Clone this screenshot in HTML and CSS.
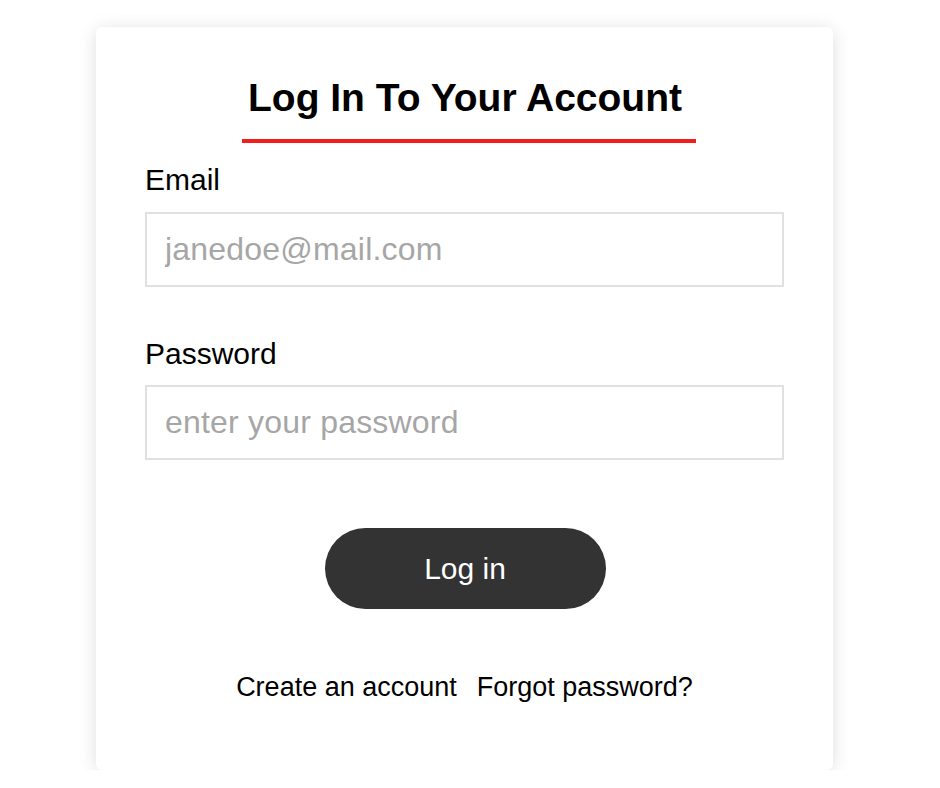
FILE: index.html
```html
<!DOCTYPE html>
<html lang="en">
<head>
<meta charset="utf-8">
<title>Log In</title>
<link rel="stylesheet" href="styles.css">
</head>
<body>
<div class="card">
  <div class="title-wrap"><h1 class="title">Log In To Your Account</h1></div>
  <form class="form">
    <label class="label" for="email">Email</label>
    <input class="field" id="email" type="text" placeholder="janedoe@mail.com">
    <label class="label label-second" for="password">Password</label>
    <input class="field" id="password" type="password" placeholder="enter your password">
    <div class="actions"><button type="button" class="btn">Log in</button></div>
  </form>
  <div class="links">
    <a class="link" href="#">Create an account</a>
    <a class="link" href="#">Forgot password?</a>
  </div>
</div>
</body>
</html>
```
FILE: styles.css
```css
* { box-sizing: border-box; }
html, body { margin: 0; padding: 0; background: #ffffff; }
body { font-family: "Liberation Sans", Arial, sans-serif; color: #000; }

.card {
  margin: 27px 0 0 96px;
  width: 737px;
  height: 743px;
  background: #fff;
  border-radius: 6px;
  box-shadow: 0 2px 18px rgba(0, 0, 0, 0.13);
  padding: 49px 49px 0;
}

.title-wrap { text-align: center; }
.title {
  display: inline-block;
  margin: 0 0 0 9px;
  font-size: 39px;
  line-height: 44px;
  font-weight: 700;
  padding: 0 14px 19px 6px;
  border-bottom: 4px solid #f21d1d;
}

.form { display: flex; flex-direction: column; }
.label {
  margin-top: 20px;
  font-size: 30px;
  line-height: 34px;
  color: #000;
}
.label-second { margin-top: 50px; }

.field {
  margin-top: 15px;
  width: 100%;
  height: 75px;
  border: 2px solid #e1e1e1;
  padding: 0 18px;
  font-family: "Liberation Sans", Arial, sans-serif;
  font-size: 32px;
  letter-spacing: 0.2px;
  color: #333;
  outline: none;
  background: #fff;
}
.label-second + .field { margin-top: 14px; }
.field::placeholder { color: #a6a6a6; }

.actions { display: flex; justify-content: center; margin-top: 68px; }
.btn {
  width: 281px;
  height: 81px;
  border: none;
  border-radius: 41px;
  background: #333333;
  color: #fff;
  font-family: "Liberation Sans", Arial, sans-serif;
  font-size: 30px;
  padding: 0;
  margin-left: 1px;
}

.links {
  display: flex;
  justify-content: center;
  gap: 20px;
  margin-top: 63px;
  font-size: 27px;
  line-height: 30px;
}
.link { color: #000; text-decoration: none; }
```
